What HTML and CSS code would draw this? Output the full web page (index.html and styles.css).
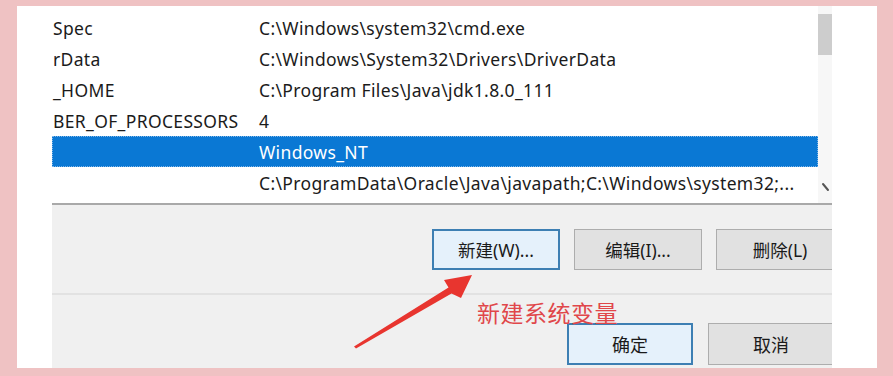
FILE: index.html
```html
<!DOCTYPE html>
<html lang="zh-CN">
<head>
<meta charset="utf-8">
<title>系统变量</title>
<link rel="stylesheet" href="styles.css">
</head>
<body>
<div class="frame">
  <div class="panel">
    <div class="dialog">
      <div class="list">
        <div class="rows">
          <div class="row"><span class="c1">Spec</span><span class="c2">C:\Windows\system32\cmd.exe</span></div>
          <div class="row"><span class="c1">rData</span><span class="c2">C:\Windows\System32\Drivers\DriverData</span></div>
          <div class="row"><span class="c1">_HOME</span><span class="c2">C:\Program Files\Java\jdk1.8.0_111</span></div>
          <div class="row"><span class="c1">BER_OF_PROCESSORS</span><span class="c2">4</span></div>
          <div class="row selected"><span class="c1"></span><span class="c2">Windows_NT</span></div>
          <div class="row"><span class="c1"></span><span class="c2">C:\ProgramData\Oracle\Java\javapath;C:\Windows\system32;...</span></div>
        </div>
        <div class="scrollbar">
          <div class="thumb"></div>
          <svg class="chev" width="10" height="10" viewBox="0 0 10 10"><path d="M2 2 L7 8" stroke="#555" stroke-width="2" fill="none" stroke-linecap="round"/></svg>
        </div>
      </div>
      <div class="bottom">
        <div class="btnrow top-btns">
          <button class="btn default">新建(W)...</button>
          <button class="btn">编辑(I)...</button>
          <button class="btn">删除(L)</button>
        </div>
        <div class="sep"></div>
        <div class="btnrow ok-btns">
          <button class="btn default wide">确定</button>
          <button class="btn wide">取消</button>
        </div>
        <div class="note">新建系统变量</div>
        <svg class="arrow" width="140" height="100" viewBox="0 0 140 100">
          <polygon points="14,86.5 108.5,27.5 104,20 132,15 121,38 111.5,33.5 16,88.5" fill="#e8352f"/>
        </svg>
      </div>
    </div>
  </div>
</div>
</body>
</html>
```

FILE: styles.css
```css
* { box-sizing: border-box; }
html, body { margin: 0; padding: 0; }
body {
  width: 893px;
  height: 376px;
  overflow: hidden;
  background: #efc2c3;
  font-family: "Noto Sans", "Noto Sans CJK SC", sans-serif;
}
.frame {
  padding: 6px 16px 8px 17px;
}
.panel {
  width: 860px;
  height: 362px;
  background: #ffffff;
  display: flex;
  padding-left: 35px;
}
.dialog {
  width: 780px;
  display: flex;
  flex-direction: column;
  overflow: hidden;
}
.list {
  height: 199px;
  display: flex;
  border-bottom: 2px solid #a9a9a9;
  background: #fff;
}
.rows {
  width: 766px;
  padding-top: 6px;
  overflow: hidden;
}
.row {
  height: 31px;
  display: flex;
  align-items: center;
  font-size: 17.5px;
  letter-spacing: 0.35px;
  color: #1b1b1b;
  white-space: nowrap;
}
.c1 {
  width: 207px;
  flex: none;
  padding-left: 1px;
  overflow: hidden;
}
.c2 { flex: none; }
.row.selected {
  background: #0a78d4;
  color: #ffffff;
  outline: 1px dotted #7fb6e8;
  outline-offset: -1px;
}
.scrollbar {
  width: 14px;
  background: #f7f7f7;
  display: flex;
  flex-direction: column;
  padding-top: 8px;
}
.thumb {
  height: 41px;
  background: #cdcdcd;
}
.chev {
  margin-top: 127px;
  margin-left: 3px;
}
.bottom {
  flex: 1;
  background: #f0f0f0;
  position: relative;
  overflow: hidden;
}
.btnrow {
  display: flex;
  gap: 14px;
}
.top-btns {
  padding-left: 380px;
  margin-top: 24px;
}
.btn {
  width: 128px;
  height: 41px;
  flex: none;
  font-family: "Noto Sans", "Noto Sans CJK SC", sans-serif;
  font-size: 17.5px;
  color: #1a1a1a;
  background: #e1e1e1;
  border: 1px solid #adadad;
  padding: 0;
}
.btn.default {
  background: #e5f1fb;
  border: 2px solid #3d7fb3;
}
.sep {
  height: 2px;
  background: #e2e2e2;
  margin-top: 23px;
}
.ok-btns {
  padding-left: 515px;
  gap: 15px;
  margin-top: 28px;
}
.btn.wide {
  width: 126px;
  height: 42px;
  font-size: 18px;
}
.note {
  position: absolute;
  left: 425px;
  top: 92px;
  font-family: "Noto Sans CJK SC", sans-serif;
  font-size: 23px;
  letter-spacing: 0.5px;
  color: #e0474a;
  line-height: 30px;
}
.arrow {
  position: absolute;
  left: 288px;
  top: 55px;
}
```
